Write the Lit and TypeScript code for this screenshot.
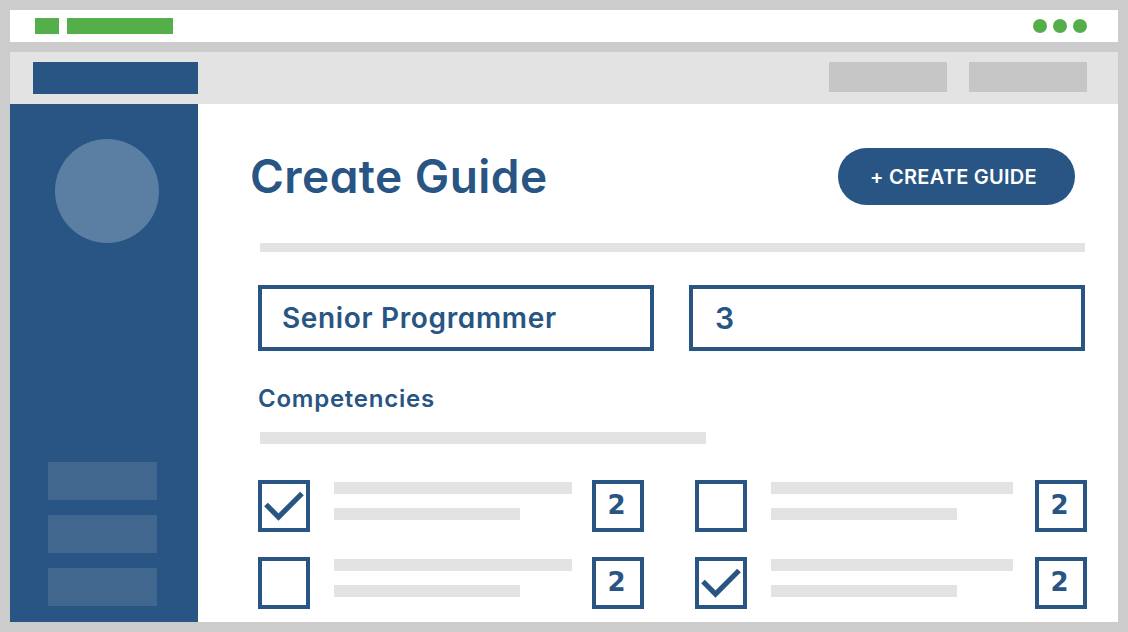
import { LitElement, html, css } from "lit";
import { customElement } from "lit/decorators.js";

@customElement("app-root")
export class AppRoot extends LitElement {
  static styles = css`
    :host {
      display: flex;
      flex-direction: column;
      gap: 10px;
      width: 1128px;
      height: 632px;
      box-sizing: border-box;
      padding: 10px;
      background: #cccccc;
      font-family: "Inter", "Lato", sans-serif;
      font-feature-settings: "cv11";
      color: #285583;
      overflow: hidden;
    }
    .topbar {
      height: 32px;
      flex: none;
      background: #fff;
      display: flex;
      align-items: center;
      padding: 0 31px 0 25px;
    }
    .g1, .g2 { height: 16px; background: #54af4b; }
    .g1 { width: 24px; margin-right: 8px; }
    .g2 { width: 106px; }
    .dots { margin-left: auto; display: flex; gap: 6px; }
    .dot { width: 14px; height: 14px; border-radius: 50%; background: #54af4b; }

    .window { flex: 1; display: flex; flex-direction: column; min-height: 0; background: #fff; }
    .header {
      height: 52px;
      flex: none;
      box-sizing: border-box;
      background: #e3e3e3;
      display: flex;
      align-items: flex-start;
      padding: 10px 31px 0 23px;
    }
    .logo { width: 165px; height: 32px; background: #285583; }
    .hbtns { margin-left: auto; display: flex; gap: 22px; }
    .hbtn { width: 118px; height: 30px; background: #c6c6c6; }

    .body { flex: 1; display: flex; min-height: 0; }
    .sidebar {
      width: 188px;
      flex: none;
      box-sizing: border-box;
      background: #285583;
      padding: 35px 0 16px 38px;
      display: flex;
      flex-direction: column;
    }
    .avatar {
      width: 104px; height: 104px; border-radius: 50%;
      background: #5a7fa3; margin-left: 7px;
    }
    .menu { margin-top: auto; display: flex; flex-direction: column; gap: 15px; }
    .menu div { width: 109px; height: 38px; background: #42678f; }

    .main { flex: 1; min-width: 0; box-sizing: border-box; padding: 44px 31px 0 60px; }
    .head {
      display: flex; align-items: center; justify-content: space-between;
      height: 57px; margin: 0 12px 0 -8px;
    }
    h1 { margin: 0; font-size: 46px; font-weight: 600; letter-spacing: 0.45px; line-height: 57px; white-space: nowrap; }
    .cta {
      box-sizing: border-box; width: 237px; height: 57px; border-radius: 29px; background: #285583;
      color: #fff; display: flex; align-items: center; justify-content: center;
      padding-right: 6px;
      font-size: 20px; font-weight: 600; letter-spacing: 0.25px; white-space: nowrap;
    }
    .rule { height: 9px; margin: 38px 2px 0 2px; background: #e3e3e3; }
    .fields { display: grid; grid-template-columns: 396px 396px; column-gap: 35px; margin-top: 33px; }
    .field {
      box-sizing: border-box; height: 66px; border: 4px solid #285583;
      display: flex; align-items: center; padding-left: 20px;
      font-size: 28px; font-weight: 600; letter-spacing: 0.65px; white-space: nowrap;
    }
    .field.short { padding-left: 22px; font-size: 30px; }
    h2 { margin: 33px 0 0; font-size: 24px; line-height: 30px; font-weight: 600; letter-spacing: 0.75px; }
    .rule2 { width: 446px; height: 12px; margin: 18px 0 0 2px; background: #e3e3e3; }

    .grid {
      display: grid; grid-template-columns: 386px 392px; column-gap: 51px;
      row-gap: 25px; margin-top: 36px; width: 829px;
    }
    .item { display: flex; align-items: flex-start; height: 52px; }
    .check {
      box-sizing: border-box; width: 52px; height: 52px; border: 4px solid #285583; flex: none;
    }
    .check svg { display: block; width: 44px; height: 44px; overflow: visible; }
    .lines { flex: 1; padding: 2px 0 0 24px; display: flex; flex-direction: column; gap: 14px; }
    .lines div { height: 12px; background: #e3e3e3; }
    .num {
      box-sizing: border-box; width: 52px; height: 52px; border: 4px solid #285583; flex: none;
      display: flex; align-items: center; justify-content: center;
      padding: 0 3px 3px 0;
      font-family: "DejaVu Sans", sans-serif;
      font-size: 26px; font-weight: 700; line-height: 1;
    }
  `;

  private item(checked: boolean, a: number, b: number) {
    return html`
      <div class="item">
        <div class="check">
          ${checked
            ? html`<svg viewBox="0 0 44 44"><polyline points="4,20.5 16.5,33 40,9.5" fill="none" stroke="#285583" stroke-width="5.2"></polyline></svg>`
            : null}
        </div>
        <div class="lines">
          <div style="width:${a}px"></div>
          <div style="width:${b}px"></div>
        </div>
        <div class="num">2</div>
      </div>
    `;
  }

  render() {
    return html`
      <div class="topbar">
        <div class="g1"></div><div class="g2"></div>
        <div class="dots"><div class="dot"></div><div class="dot"></div><div class="dot"></div></div>
      </div>
      <div class="window">
        <div class="header">
          <div class="logo"></div>
          <div class="hbtns"><div class="hbtn"></div><div class="hbtn"></div></div>
        </div>
        <div class="body">
          <aside class="sidebar">
            <div class="avatar"></div>
            <div class="menu"><div></div><div></div><div></div></div>
          </aside>
          <main class="main">
            <div class="head">
              <h1>Create Guide</h1>
              <div class="cta">+ CREATE GUIDE</div>
            </div>
            <div class="rule"></div>
            <div class="fields">
              <div class="field">Senior Programmer</div>
              <div class="field short">3</div>
            </div>
            <h2>Competencies</h2>
            <div class="rule2"></div>
            <div class="grid">
              ${this.item(true, 238, 186)}
              ${this.item(false, 242, 186)}
              ${this.item(false, 238, 186)}
              ${this.item(true, 242, 186)}
            </div>
          </main>
        </div>
      </div>
    `;
  }
}
